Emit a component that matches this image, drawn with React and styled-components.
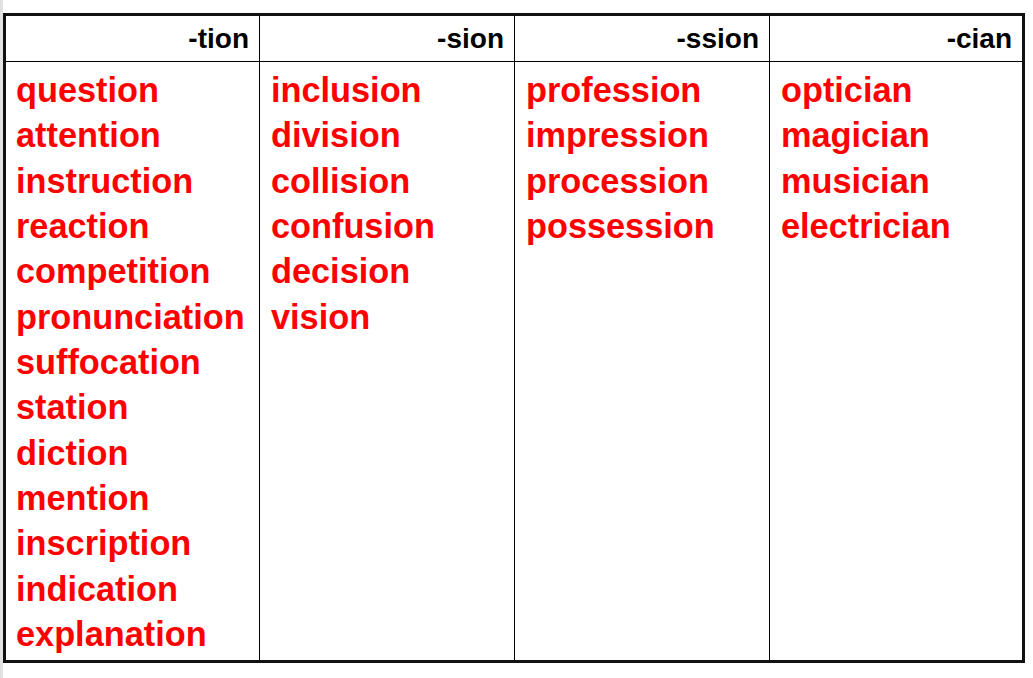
import React from "react";
import styled, { createGlobalStyle } from "styled-components";

const Global = createGlobalStyle`
  html, body { margin: 0; padding: 0; background: #fff; }
  body { font-family: "Liberation Sans", Arial, sans-serif; }
`;

const Page = styled.div`
  min-height: 100vh;
  box-sizing: border-box;
  border-left: 3px solid #e2e2e2;
  padding-top: 13px;
`;

const Table = styled.div`
  width: 1022px;
  height: 650px;
  box-sizing: border-box;
  border: 3px solid #111;
  display: grid;
  grid-template-columns: 253px 255px 255px 1fr;
  grid-template-rows: 46px 1fr;
`;

const HeadCell = styled.div`
  border-bottom: 1px solid #000;
  border-left: ${(p) => (p.$first ? "none" : "1px solid #000")};
  text-align: right;
  padding-right: 10px;
  font-weight: 700;
  font-size: 28px;
  line-height: 46px;
  color: #000;
`;

const BodyCell = styled.div`
  border-left: ${(p) => (p.$first ? "none" : "1px solid #000")};
  padding: 6px 8px 0 ${(p) => (p.$first ? "10px" : "11px")};
  display: flex;
  flex-direction: column;
`;

const Word = styled.div`
  font-weight: 700;
  font-size: 34.3px;
  line-height: 45.33px;
  color: #ff0000;
  white-space: nowrap;
`;

const columns = [
  {
    head: "-tion",
    words: [
      "question",
      "attention",
      "instruction",
      "reaction",
      "competition",
      "pronunciation",
      "suffocation",
      "station",
      "diction",
      "mention",
      "inscription",
      "indication",
      "explanation",
    ],
  },
  {
    head: "-sion",
    words: ["inclusion", "division", "collision", "confusion", "decision", "vision"],
  },
  {
    head: "-ssion",
    words: ["profession", "impression", "procession", "possession"],
  },
  {
    head: "-cian",
    words: ["optician", "magician", "musician", "electrician"],
  },
];

export default function App() {
  return (
    <Page>
      <Global />
      <Table>
        {columns.map((c, i) => (
          <HeadCell key={c.head} $first={i === 0}>
            {c.head}
          </HeadCell>
        ))}
        {columns.map((c, i) => (
          <BodyCell key={c.head + "b"} $first={i === 0}>
            {c.words.map((w) => (
              <Word key={w}>{w}</Word>
            ))}
          </BodyCell>
        ))}
      </Table>
    </Page>
  );
}
